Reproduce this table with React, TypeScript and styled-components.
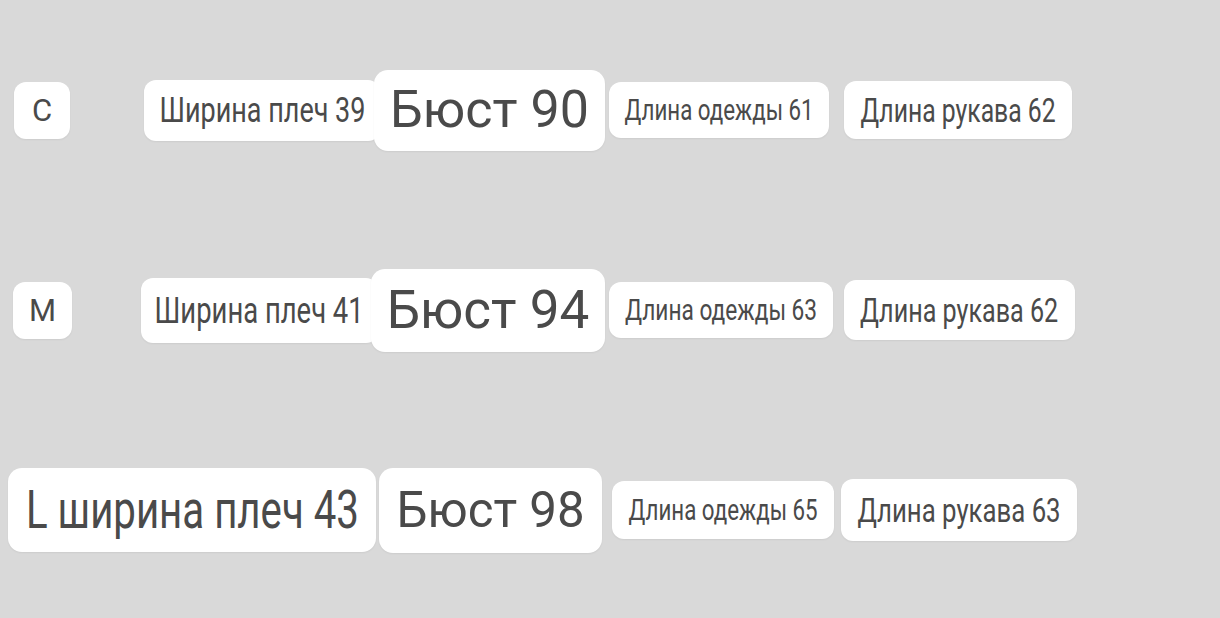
import React, { useLayoutEffect, useRef, useState } from 'react'
import styled, { createGlobalStyle } from 'styled-components'

const GlobalStyle = createGlobalStyle`
  html, body {
    margin: 0;
    padding: 0;
    background: #d9d9d9;
  }
  body {
    width: 1220px;
    height: 618px;
    overflow: hidden;
    font-family: Roboto, "Liberation Sans", sans-serif;
  }
`

type Cell = {
  text: string
  gap: number // space before the pill (negative = overlaps the previous one)
  w: number
  h: number
  size: number
  tw?: number // target width of the text, narrowed at run time
  front?: boolean
  radius?: number
}

const rows: Cell[][] = [
  [
    { text: 'C', gap: 14, w: 56, h: 57, size: 31 },
    { text: 'Ширина плеч 39', gap: 74, w: 236, h: 61, size: 35, tw: 206 },
    { text: 'Бюст 90', gap: -6, w: 231, h: 81, size: 52, front: true, radius: 14 },
    { text: 'Длина одежды 61', gap: 4, w: 220, h: 56, size: 30, tw: 189 },
    { text: 'Длина рукава 62', gap: 15, w: 228, h: 58, size: 33, tw: 195 },
  ],
  [
    { text: 'M', gap: 13, w: 59, h: 57, size: 31 },
    { text: 'Ширина плеч 41', gap: 69, w: 237, h: 65, size: 37, tw: 209 },
    { text: 'Бюст 94', gap: -7, w: 234, h: 83, size: 53, front: true, radius: 14 },
    { text: 'Длина одежды 63', gap: 4, w: 224, h: 56, size: 30, tw: 192 },
    { text: 'Длина рукава 62', gap: 11, w: 231, h: 60, size: 33, tw: 198 },
  ],
  [
    { text: 'L ширина плеч 43', gap: 8, w: 368, h: 84, size: 53, tw: 333, radius: 14 },
    { text: 'Бюст 98', gap: 3, w: 223, h: 85, size: 50, tw: 188, radius: 14 },
    { text: 'Длина одежды 65', gap: 10, w: 222, h: 58, size: 30, tw: 189 },
    { text: 'Длина рукава 63', gap: 7, w: 236, h: 62, size: 34, tw: 203 },
  ],
]

const Page = styled.div`
  display: flex;
  flex-direction: column;
  gap: 100px;
  padding-top: 60px;
`

const Row = styled.div`
  display: flex;
  align-items: center;
  height: 100px;
`

const Pill = styled.div<{ $gap: number; $w: number; $h: number; $front?: boolean; $radius: number }>`
  position: relative;
  z-index: ${({ $front }) => ($front ? 2 : 1)};
  flex: none;
  display: flex;
  align-items: center;
  justify-content: center;
  margin-left: ${({ $gap }) => $gap}px;
  width: ${({ $w }) => $w}px;
  height: ${({ $h }) => $h}px;
  box-sizing: border-box;
  background: #ffffff;
  border-radius: ${({ $radius }) => $radius}px;
  box-shadow: 0 1px 2px rgba(0, 0, 0, 0.06);
`

const Label = styled.span<{ $size: number }>`
  display: inline-block;
  flex: none;
  white-space: nowrap;
  font-family: Roboto, "Liberation Sans", sans-serif;
  font-size: ${({ $size }) => $size}px;
  font-weight: 400;
  line-height: 1;
  color: #4a4a4a;
  transform-origin: center center;
`

const FitLabel = ({ text, size, tw }: { text: string; size: number; tw?: number }) => {
  const ref = useRef<HTMLSpanElement>(null)
  const [scale, setScale] = useState(1)

  useLayoutEffect(() => {
    if (!tw || !ref.current) return
    const natural = ref.current.offsetWidth
    if (natural > 0) setScale(tw / natural)
  }, [tw, text, size])

  return (
    <Label ref={ref} $size={size} style={scale !== 1 ? { transform: `scaleX(${scale})` } : undefined}>
      {text}
    </Label>
  )
}

export default function App() {
  return (
    <>
      <GlobalStyle />
      <Page>
        {rows.map((row, i) => (
          <Row key={i}>
            {row.map((c) => (
              <Pill
                key={c.text}
                $gap={c.gap}
                $w={c.w}
                $h={c.h}
                $front={c.front}
                $radius={c.radius ?? 12}
              >
                <FitLabel text={c.text} size={c.size} tw={c.tw} />
              </Pill>
            ))}
          </Row>
        ))}
      </Page>
    </>
  )
}
